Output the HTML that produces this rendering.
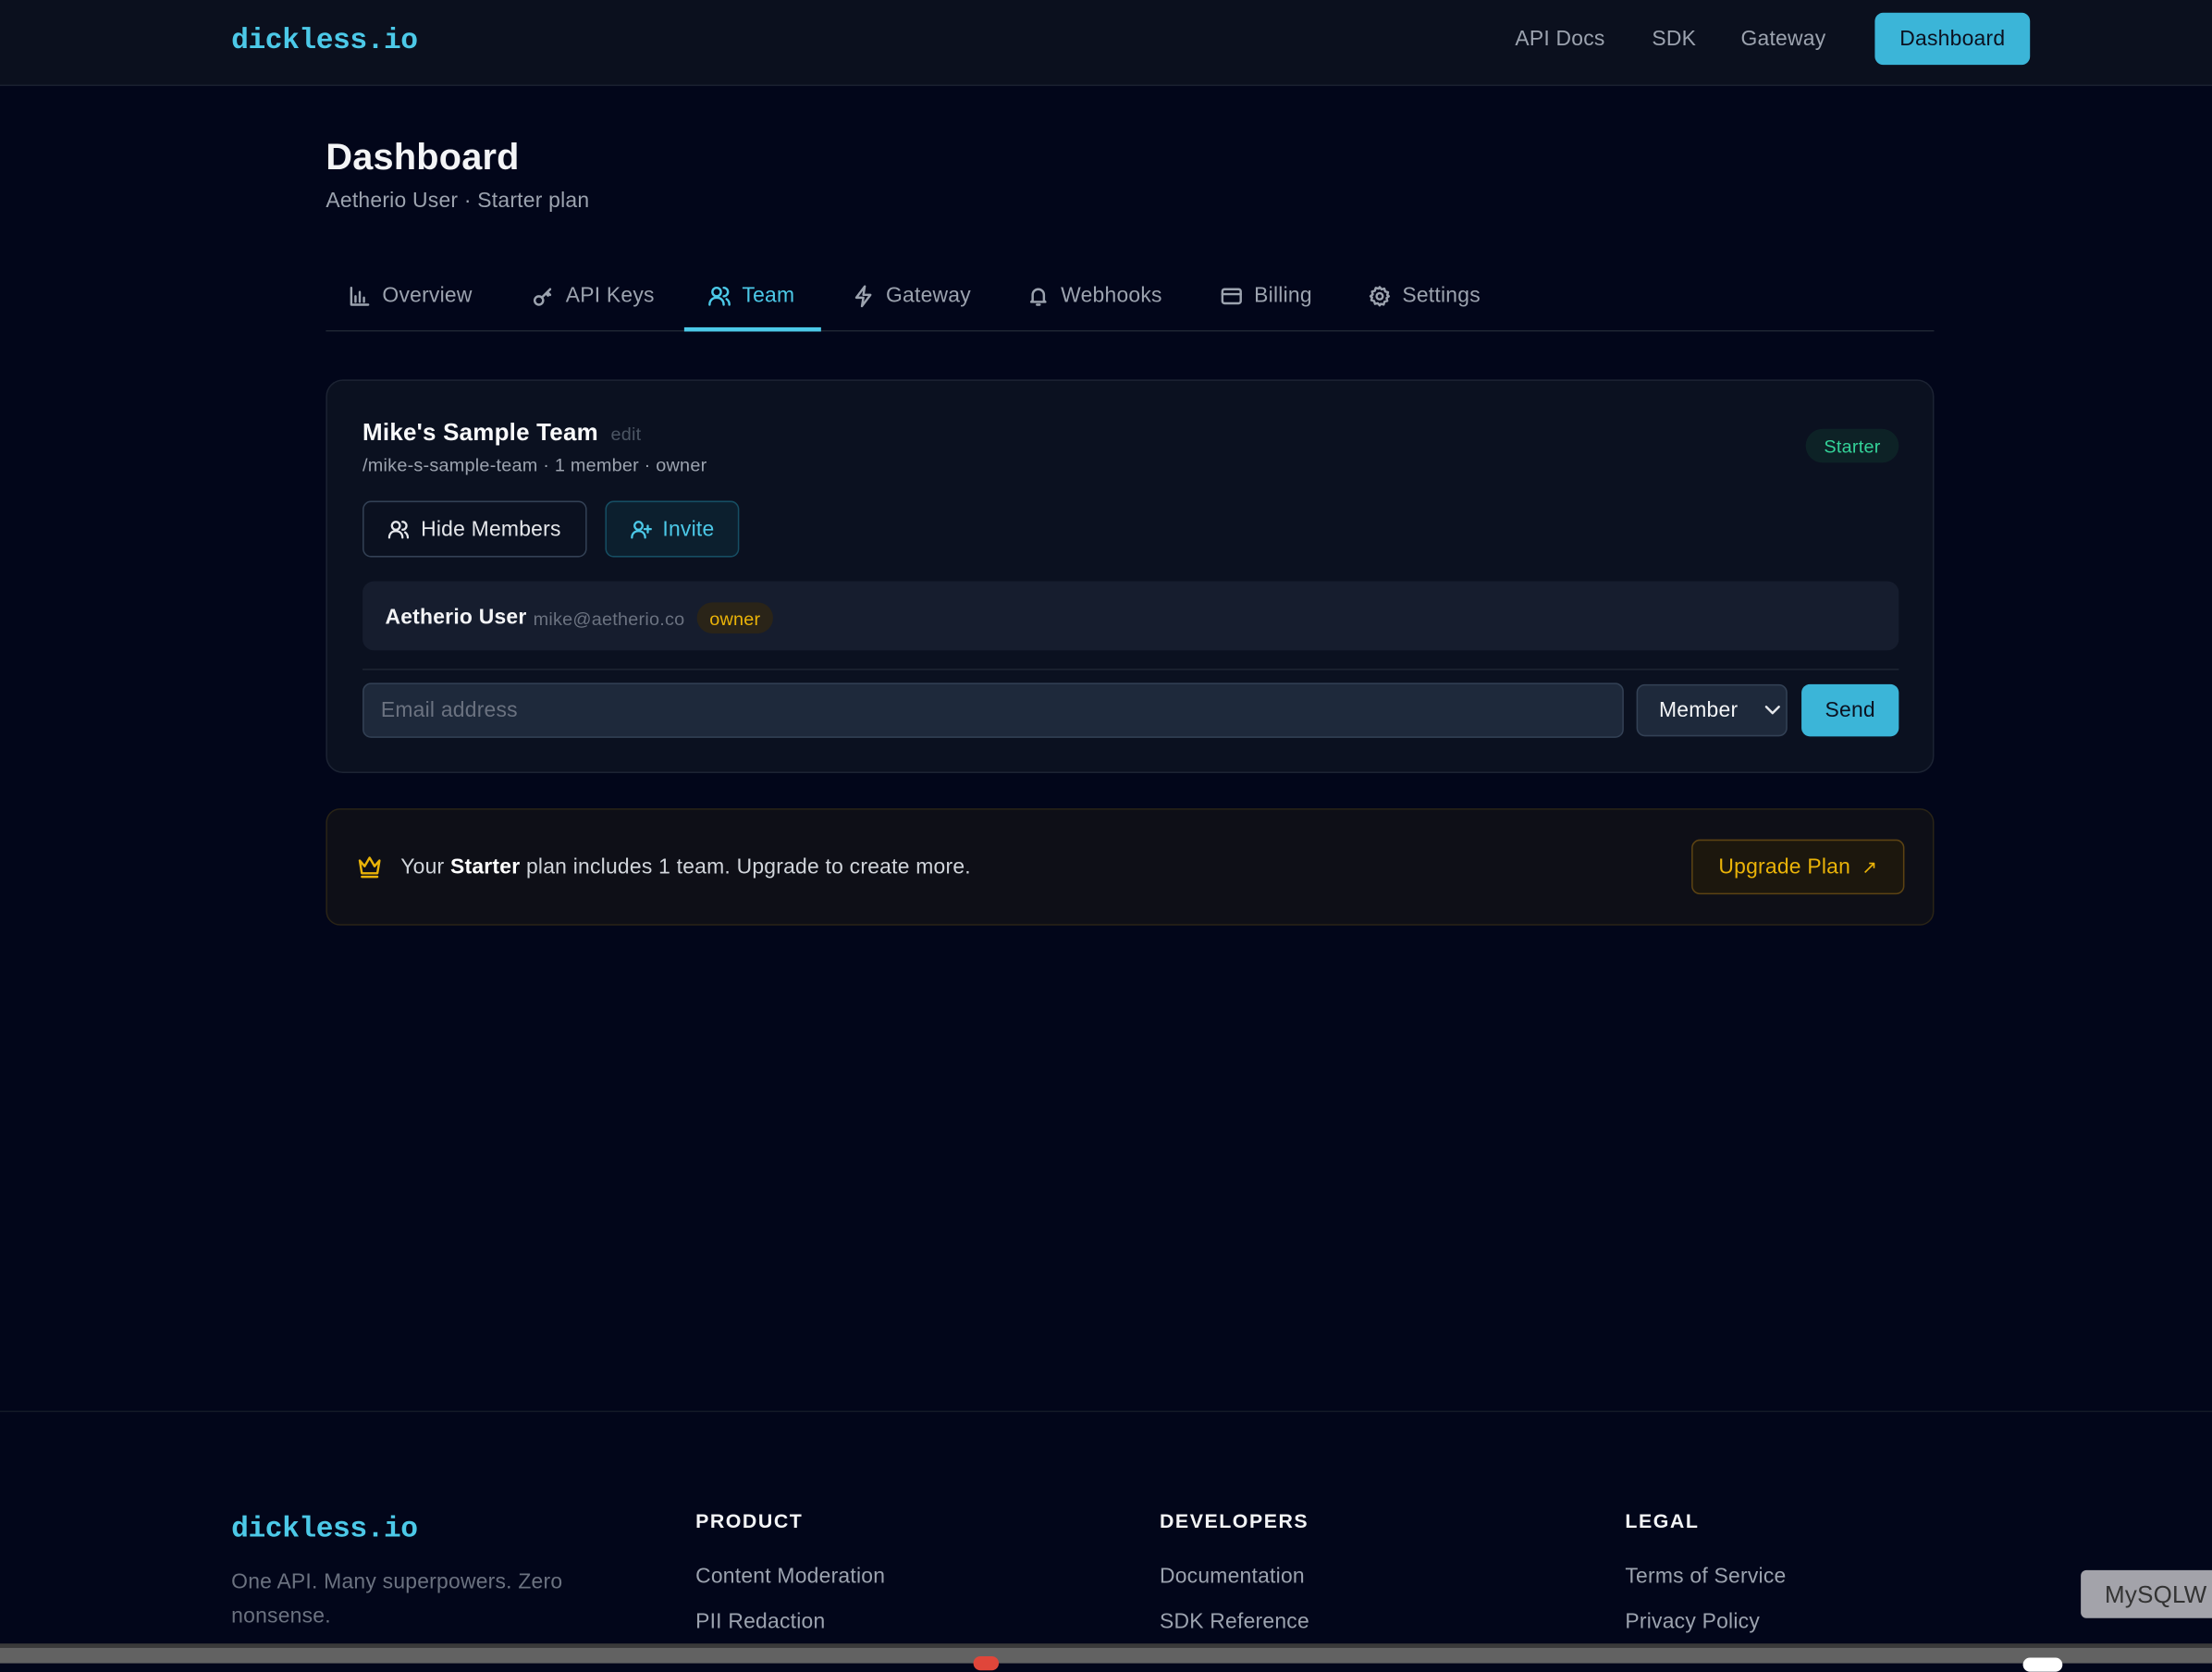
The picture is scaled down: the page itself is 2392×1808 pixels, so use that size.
<!DOCTYPE html>
<html><head><meta charset="utf-8"><style>
html,body{margin:0;padding:0;background:#02061a;overflow:hidden;width:2392px;height:1798px}
#w{position:absolute;left:0;top:0;width:1568px;height:1179px;transform:scale(1.52551);transform-origin:0 0;font-family:"Liberation Sans",sans-serif;color:#e5e7eb;background:#02061a;letter-spacing:0.15px}
.a{position:absolute;white-space:nowrap}
.logo{font-family:"Liberation Mono",monospace;color:#4cc9e8;font-size:20.5px;font-weight:bold;letter-spacing:-0.3px}
.nav{font-size:15px;color:#9ca3af}
svg{fill:none;stroke:currentColor;stroke-width:1.6;stroke-linecap:round;stroke-linejoin:round}
.tab{font-size:15px;color:#9ca3af;display:flex;align-items:center;gap:8px;top:201px}
.tab svg{width:16px;height:16px}
.box{position:absolute;box-sizing:border-box}
.btn{display:flex;align-items:center;justify-content:center;gap:8px;font-size:15px}
.fh{font-size:14px;font-weight:bold;letter-spacing:1px;color:#f3f4f6;top:1070px}
.fl{font-size:15px;color:#9ca3af}
</style></head><body><div id="w">
<div class="box" style="left:0;top:0;width:1568px;height:61px;background:#0b101e;border-bottom:1px solid #1a2030"></div>
<div class="a logo" style="left:164px;top:18px">dickless.io</div>
<div class="a nav" style="left:1074px;top:19px">API Docs</div>
<div class="a nav" style="left:1171px;top:19px">SDK</div>
<div class="a nav" style="left:1234px;top:19px">Gateway</div>
<div class="box btn" style="left:1329px;top:9px;width:110px;height:37px;background:#3bb5d8;border-radius:6px;color:#0b1120;font-weight:500">Dashboard</div>

<div class="a" style="left:231px;top:96px;font-size:26px;font-weight:bold;color:#f3f4f6">Dashboard</div>
<div class="a" style="left:231px;top:134px;font-size:15px;color:#9ca3af">Aetherio User · Starter plan</div>

<div class="a tab" style="left:247px"><svg viewBox="0 0 16 16"><path d="M2 2v12h12M5 12V8M8 12V5M11 12V9"/></svg>Overview</div>
<div class="a tab" style="left:377px"><svg viewBox="0 0 16 16"><circle cx="5" cy="11" r="3"/><path d="M7 9l6-6M11 5l2 2M10 6l1.5 1.5"/></svg>API Keys</div>
<div class="a tab" style="left:502px;color:#4cc9e8"><svg viewBox="0 0 16 16"><circle cx="6" cy="5" r="3"/><path d="M1 14c0-3 2-5 5-5s5 2 5 5M11 2a3 3 0 010 6M13 10c1.5 1 2 2.5 2 4"/></svg>Team</div>
<div class="a tab" style="left:604px"><svg viewBox="0 0 16 16"><path d="M9 1L3 9h5l-1 6 6-8H8z"/></svg>Gateway</div>
<div class="a tab" style="left:728px"><svg viewBox="0 0 16 16"><path d="M4 11V7a4 4 0 018 0v4l1 1H3zM7 14h2"/></svg>Webhooks</div>
<div class="a tab" style="left:865px"><svg viewBox="0 0 16 16"><rect x="1.5" y="3" width="13" height="10" rx="1.5"/><path d="M1.5 6.5h13"/></svg>Billing</div>
<div class="a tab" style="left:970px"><svg viewBox="0 0 16 16"><circle cx="8" cy="8" r="2.2"/><path d="M8 1.5l1.3 1.6 2-.5.6 2 2 .6-.5 2L14.5 8l-1.6 1.3.5 2-2 .6-.6 2-2-.5L8 14.5l-1.3-1.6-2 .5-.6-2-2-.6.5-2L1.5 8l1.6-1.3-.5-2 2-.6.6-2 2 .5z"/></svg>Settings</div>
<div class="box" style="left:231px;top:234px;width:1140px;height:1px;background:#1e2533"></div>
<div class="box" style="left:485px;top:232px;width:97px;height:3px;background:#4cc9e8"></div>

<div class="box" style="left:231px;top:269px;width:1140px;height:279px;background:#0b1120;border:1px solid #1c2333;border-radius:12px"></div>
<div class="a" style="left:257px;top:297px;font-size:17px;font-weight:bold;color:#f9fafb">Mike's Sample Team <span style="font-size:13px;font-weight:normal;color:#4b5563;margin-left:4px">edit</span></div>
<div class="a" style="left:257px;top:322px;font-size:13px;color:#9ca3af">/mike-s-sample-team · 1 member · owner</div>
<div class="box btn" style="left:1280px;top:304px;width:66px;height:24px;border-radius:12px;background:#0d2226;color:#34d399;font-size:13px">Starter</div>
<div class="box btn" style="left:257px;top:355px;width:159px;height:40px;border:1px solid #334155;border-radius:6px;color:#e5e7eb"><svg viewBox="0 0 16 16" width="15" height="15"><circle cx="6" cy="5" r="3"/><path d="M1 14c0-3 2-5 5-5s5 2 5 5M11 2a3 3 0 010 6M13 10c1.5 1 2 2.5 2 4"/></svg>Hide Members</div>
<div class="box btn" style="left:429px;top:355px;width:95px;height:40px;border:1px solid #164e63;background:#0c1f2e;border-radius:6px;color:#4cc9e8"><svg viewBox="0 0 16 16" width="15" height="15"><circle cx="6" cy="5" r="3"/><path d="M1 14c0-3 2-5 5-5s5 2 5 5M13 5v5M10.5 7.5h5"/></svg>Invite</div>
<div class="box" style="left:257px;top:412px;width:1089px;height:49px;background:#161d2e;border-radius:8px"></div>
<div class="a" style="left:273px;top:429px;font-size:15px;font-weight:bold;color:#f3f4f6">Aetherio User</div>
<div class="a" style="left:378px;top:431px;font-size:13px;color:#6b7280">mike@aetherio.co</div>
<div class="box btn" style="left:494px;top:427px;width:54px;height:22px;border-radius:11px;background:#2a2418;color:#eab308;font-size:13px">owner</div>
<div class="box" style="left:257px;top:474px;width:1089px;height:1px;background:#1e2533"></div>
<div class="box" style="left:257px;top:484px;width:894px;height:39px;background:#1e293b;border:1px solid #334155;border-radius:6px"></div>
<div class="a" style="left:270px;top:495px;font-size:15px;color:#6b7280">Email address</div>
<div class="box" style="left:1160px;top:485px;width:107px;height:37px;background:#1e293b;border:1px solid #334155;border-radius:6px"></div>
<div class="a" style="left:1176px;top:495px;font-size:15px;color:#f3f4f6">Member</div>
<svg class="a" style="left:1250px;top:497px" width="13" height="12" viewBox="0 0 13 12"><path d="M2 4l4.5 4.5L11 4"/></svg>
<div class="box btn" style="left:1277px;top:485px;width:69px;height:37px;background:#3bb5d8;border-radius:6px;color:#0b1120;font-weight:500">Send</div>

<div class="box" style="left:231px;top:573px;width:1140px;height:83px;background:#0e0f17;border:1px solid #2a2416;border-radius:10px"></div>
<svg class="a" style="left:253px;top:606px;color:#eab308" width="18" height="17" viewBox="0 0 18 17"><path d="M2 4l3.5 4L9 2l3.5 6L16 4l-1.5 9h-11zM3.5 15.5h11"/></svg>
<div class="a" style="left:284px;top:606px;font-size:15px;color:#d1d5db">Your <b style="color:#fff">Starter</b> plan includes 1 team. Upgrade to create more.</div>
<div class="box btn" style="left:1199px;top:595px;width:151px;height:39px;background:#1c170d;border:1px solid #5c4313;border-radius:6px;color:#eab308">Upgrade Plan <span style="font-size:13px">↗</span></div>

<div class="box" style="left:0;top:1000px;width:1568px;height:1px;background:#141a28"></div>
<div class="a logo" style="left:164px;top:1073px">dickless.io</div>
<div class="a" style="left:164px;top:1110px;font-size:15px;line-height:24px;color:#6b7280;white-space:normal;width:260px">One API. Many superpowers. Zero nonsense.</div>
<div class="a fh" style="left:493px">PRODUCT</div>
<div class="a fh" style="left:822px">DEVELOPERS</div>
<div class="a fh" style="left:1152px">LEGAL</div>
<div class="a fl" style="left:493px;top:1109px">Content Moderation</div>
<div class="a fl" style="left:493px;top:1141px">PII Redaction</div>
<div class="a fl" style="left:822px;top:1109px">Documentation</div>
<div class="a fl" style="left:822px;top:1141px">SDK Reference</div>
<div class="a fl" style="left:1152px;top:1109px">Terms of Service</div>
<div class="a fl" style="left:1152px;top:1141px">Privacy Policy</div>
<div class="box" style="left:1475px;top:1113px;width:100px;height:34px;background:#a3a3aa;border-radius:4px"></div>
<div class="a" style="left:1492px;top:1121px;font-size:17px;color:#333">MySQLW</div>
<div class="box" style="left:0;top:1165px;width:1568px;height:3px;background:#3a3a3a"></div>
<div class="box" style="left:0;top:1168px;width:1568px;height:11px;background:#626262"></div>
<div class="box" style="left:690px;top:1174px;width:18px;height:10px;border-radius:9px;background:#e0463a"></div>
<div class="box" style="left:1434px;top:1175px;width:28px;height:10px;border-radius:14px;background:#fff"></div>
</div></body></html>
